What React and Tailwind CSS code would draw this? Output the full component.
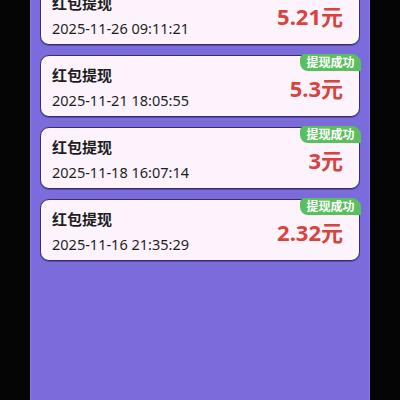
const records = [
  { amount: '5.21', time: '2025-11-26 09:11:21' },
  { amount: '5.3', time: '2025-11-21 18:05:55' },
  { amount: '3', time: '2025-11-18 16:07:14' },
  { amount: '2.32', time: '2025-11-16 21:35:29' },
];

export default function App() {
  return (
    <div
      className="h-[400px] w-[400px] overflow-hidden bg-[#050505] flex justify-center"
      style={{ fontFamily: '"Noto Sans", "Noto Sans CJK SC", sans-serif' }}
    >
      <div className="flex w-[340px] h-full">
        <div className="w-full h-full bg-[#7b6bdb] border-x border-[#8b7ce3] px-[9px] overflow-hidden">
          <div className="flex flex-col gap-[10px] -mt-[17px]">
            {records.map((r, i) => (
              <div
                key={i}
                className="relative h-[62px] rounded-[9px] border-[1.5px] border-[#3a2d6e] bg-[#fcf3fc] shadow-[0_1px_0_#5a4bb0] flex items-center justify-between pl-[11px] pr-[16px]"
              >
                <div className="flex flex-col pt-[3px]">
                  <div className="text-[15px] leading-[20px] font-bold text-[#1e1e1e]">红包提现</div>
                  <div className="text-[14.5px] leading-[20px] mt-[5px] text-[#1e1e1e]">{r.time}</div>
                </div>
                <div className="text-[22px] leading-none font-bold text-[#d8443d] mt-[3px]">
                  {r.amount}元
                </div>
                <div className="absolute -top-[2px] -right-[1.5px] h-[17px] px-[6px] rounded-tr-[9px] rounded-bl-[8px] rounded-tl-[5px] bg-[#5cbf5e] text-white text-[12px] leading-[17px] font-bold">
                  提现成功
                </div>
              </div>
            ))}
          </div>
        </div>
      </div>
    </div>
  );
}
